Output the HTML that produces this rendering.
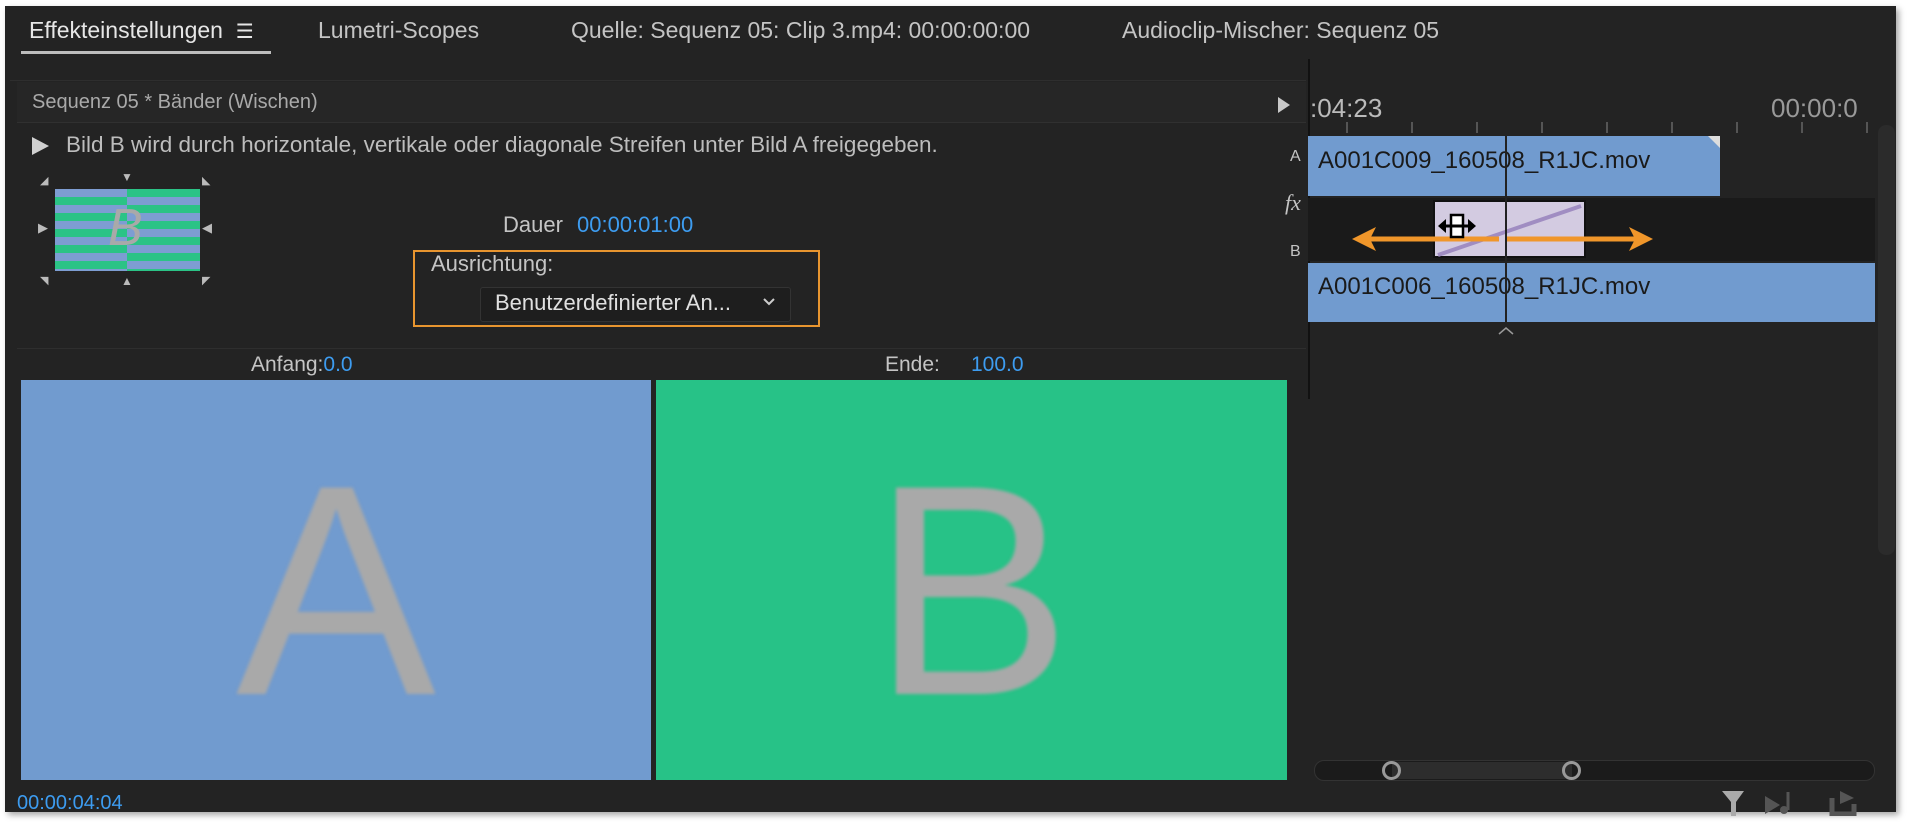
<!DOCTYPE html>
<html><head><meta charset="utf-8"><style>
body{margin:0;width:1920px;height:822px;background:#fff;position:relative;overflow:hidden;font-family:"Liberation Sans",sans-serif}
.a{position:absolute}
#p{left:5px;top:6px;width:1891px;height:806px;background:#232323;box-shadow:3px 3px 6px rgba(0,0,0,.35)}
.t{color:#c4c4c4;font-size:20px;white-space:nowrap}
.blue{color:#3d9cf0}
</style></head><body>
<div id="p" class="a"></div>
<!-- tabs -->
<div class="a t" style="left:29px;top:17px;color:#e6e6e6;font-size:23px">Effekteinstellungen&nbsp;&nbsp;<span style="font-size:20px">☰</span></div>
<div class="a" style="left:21px;top:51px;width:250px;height:3px;background:#bdbdbd"></div>
<div class="a t" style="left:318px;top:17px;font-size:23px">Lumetri-Scopes</div>
<div class="a t" style="left:571px;top:17px;font-size:23px">Quelle: Sequenz 05: Clip 3.mp4: 00:00:00:00</div>
<div class="a t" style="left:1122px;top:17px;font-size:23px">Audioclip-Mischer: Sequenz 05</div>
<div class="a" style="left:10px;top:80px;width:1296px;height:1px;background:#2e2e2e"></div>
<!-- header row -->
<div class="a" style="left:17px;top:82px;width:1289px;height:40px;background:#262626;border-bottom:1px solid #303030"></div>
<div class="a t" style="left:32px;top:91px;font-size:20px;color:#a9a9a9">Sequenz 05 * Bänder (Wischen)</div>
<div class="a" style="left:1278px;top:97px;width:0;height:0;border-left:12px solid #c8c8c8;border-top:8px solid transparent;border-bottom:8px solid transparent"></div>
<div class="a" style="left:32px;top:137px;width:0;height:0;border-left:17px solid #d0d0d0;border-top:9px solid transparent;border-bottom:9px solid transparent"></div>
<div class="a t" style="left:66px;top:132px;font-size:22.5px;color:#bdbdbd">Bild B wird durch horizontale, vertikale oder diagonale Streifen unter Bild A freigegeben.</div>
<!-- thumbnail -->
<div class="a" style="left:55px;top:189px;width:145px;height:82px;background:repeating-linear-gradient(180deg,#7d9dd2 0 8px,#2bc386 8px 16px)"></div>
<div class="a" style="left:127px;top:189px;width:73px;height:82px;background:repeating-linear-gradient(180deg,#2bc386 0 8px,#7d9dd2 8px 16px)"></div>
<div class="a" style="left:108px;top:198px;font-size:52px;color:#a9a9a9;font-style:italic;line-height:60px">B</div>
<div class="a" style="left:40px;top:174px;color:#bbb;font-size:11px">◢</div>
<div class="a" style="left:121px;top:170px;color:#bbb;font-size:12px">▼</div>
<div class="a" style="left:202px;top:174px;color:#bbb;font-size:11px">◣</div>
<div class="a" style="left:38px;top:220px;color:#bbb;font-size:13px">▶</div>
<div class="a" style="left:202px;top:220px;color:#bbb;font-size:13px">◀</div>
<div class="a" style="left:40px;top:274px;color:#bbb;font-size:11px">◥</div>
<div class="a" style="left:121px;top:274px;color:#bbb;font-size:12px">▲</div>
<div class="a" style="left:202px;top:274px;color:#bbb;font-size:11px">◤</div>
<!-- dauer -->
<div class="a t" style="left:503px;top:212px;font-size:22px">Dauer</div>
<div class="a t blue" style="left:577px;top:212px;font-size:22px">00:00:01:00</div>
<div class="a" style="left:413px;top:250px;width:403px;height:73px;border:2px solid #e8952f"></div>
<div class="a t" style="left:431px;top:251px;font-size:22px">Ausrichtung:</div>
<div class="a" style="left:480px;top:287px;width:309px;height:33px;background:#1e1e1e;border:1px solid #333;border-radius:3px"></div>
<div class="a t" style="left:495px;top:290px;font-size:22px;color:#e0e0e0">Benutzerdefinierter An...</div>
<svg class="a" style="left:762px;top:297px" width="14" height="10"><path d="M2 2l5 5 5-5" stroke="#ccc" stroke-width="2" fill="none"/></svg>
<div class="a" style="left:17px;top:348px;width:1289px;height:1px;background:#2e2e2e"></div>
<div class="a t" style="left:251px;top:353px;font-size:21px">Anfang:<span class="blue">0.0</span></div>
<div class="a t" style="left:885px;top:353px;font-size:21px">Ende:</div>
<div class="a t blue" style="left:971px;top:353px;font-size:21px">100.0</div>
<!-- A B panels -->
<div class="a" style="left:21px;top:380px;width:630px;height:400px;background:#719bcf;overflow:hidden"><div class="a" style="left:0;width:630px;top:60px;text-align:center;font-size:300px;color:#a9a9a9;line-height:300px;filter:blur(1.5px)">A</div></div>
<div class="a" style="left:656px;top:380px;width:631px;height:400px;background:#27c287;overflow:hidden"><div class="a" style="left:0;width:631px;top:60px;text-align:center;font-size:300px;color:#a9a9a9;line-height:300px;filter:blur(1.5px)">B</div></div>
<div class="a t blue" style="left:17px;top:792px;font-size:20px">00:00:04:04</div>
<!-- timeline -->
<div class="a" style="left:1308px;top:59px;width:2px;height:340px;background:#111"></div>
<div class="a t" style="left:1310px;top:93px;font-size:26px;color:#bbb">:04:23</div>
<div class="a t" style="left:1771px;top:93px;font-size:26px;color:#999">00:00:0</div>
<div class="a" style="left:1346px;top:122px;width:530px;height:11px;background:repeating-linear-gradient(90deg,#555 0 2px,transparent 2px 65px)"></div>
<div class="a t" style="left:1290px;top:148px;font-size:16px">A</div>
<div class="a t" style="left:1285px;top:190px;font-size:22px;font-style:italic;font-family:'Liberation Serif',serif">fx</div>
<div class="a t" style="left:1290px;top:243px;font-size:16px">B</div>
<div class="a" style="left:1308px;top:136px;width:412px;height:60px;background:#719bcf"></div>
<div class="a" style="left:1708px;top:136px;width:0;height:0;border-top:12px solid #ddd;border-left:12px solid transparent"></div>
<div class="a t" style="left:1318px;top:147px;font-size:24px;color:#1a1a1a">A001C009_160508_R1JC.mov</div>
<div class="a" style="left:1308px;top:198px;width:567px;height:63px;background:#1a1a1a"></div>
<div class="a" style="left:1433px;top:200px;width:153px;height:58px;background:#d3cbe1;border:2px solid #111;box-sizing:border-box"></div>
<svg class="a" style="left:1433px;top:200px" width="153" height="58"><line x1="5" y1="55" x2="148" y2="6" stroke="#a08dc2" stroke-width="4"/></svg>
<div class="a" style="left:1308px;top:263px;width:567px;height:59px;background:#719bcf"></div>
<div class="a t" style="left:1318px;top:273px;font-size:24px;color:#1a1a1a">A001C006_160508_R1JC.mov</div>
<div class="a" style="left:1505px;top:136px;width:2px;height:190px;background:#222"></div>
<svg class="a" style="left:1496px;top:325px" width="20" height="12"><path d="M3 9l7-6 7 6" stroke="#999" stroke-width="1.5" fill="none"/></svg>
<svg class="a" style="left:1350px;top:205px" width="305" height="60"><path d="M10 34H149M157 34H296" stroke="#f0962a" stroke-width="5"/><path d="M2 34L26 22L20 34L26 46Z" fill="#f0962a"/><path d="M303 34L279 22L285 34L279 46Z" fill="#f0962a"/><path d="M96 14l-8 7 8 7zM118 14l8 7-8 7z" fill="#000"/><rect x="101" y="10" width="12" height="22" fill="#fff" stroke="#000" stroke-width="2.5"/><path d="M94 21H120" stroke="#000" stroke-width="3"/></svg>
<!-- scrollbars -->
<div class="a" style="left:1878px;top:125px;width:17px;height:430px;background:#2b2b2b;border-radius:8px"></div>
<div class="a" style="left:1314px;top:760px;width:559px;height:19px;background:#1b1b1b;border:1px solid #333;border-radius:10px"></div>
<div class="a" style="left:1392px;top:762px;width:180px;height:17px;background:#2d2d2d"></div>
<div class="a" style="left:1382px;top:761px;width:13px;height:13px;border:3px solid #999;border-radius:50%"></div>
<div class="a" style="left:1562px;top:761px;width:13px;height:13px;border:3px solid #999;border-radius:50%"></div>
<svg class="a" style="left:1720px;top:788px" width="140" height="28"><path d="M2 3H24L16 14V28H11V14Z" fill="#aaa"/><path d="M45 8L60 17L45 26Z" fill="#555"/><path d="M68 4V22" stroke="#555" stroke-width="3"/><circle cx="64" cy="22" r="4" fill="#555"/><path d="M112 10V26H134V16" stroke="#555" stroke-width="5" fill="none"/><path d="M120 3L134 10L120 16Z" fill="#555"/></svg>
</body></html>
